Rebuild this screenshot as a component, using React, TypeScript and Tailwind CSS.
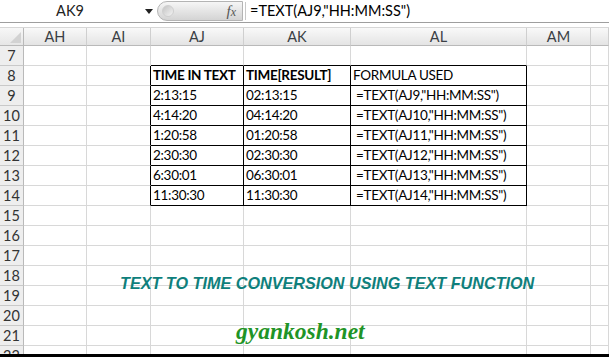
const COLS = [
  { key: "AH", w: "w-[63px]" },
  { key: "AI", w: "w-[64px]" },
  { key: "AJ", w: "w-[93px]" },
  { key: "AK", w: "w-[107px]" },
  { key: "AL", w: "w-[176px]" },
  { key: "AM", w: "w-[64px]" },
  { key: "", w: "w-[18px]" },
];

const TABLE: Record<number, string[]> = {
  8: ["TIME IN TEXT", "TIME[RESULT]", "FORMULA USED"],
  9: ["2:13:15", "02:13:15", '=TEXT(AJ9,"HH:MM:SS")'],
  10: ["4:14:20", "04:14:20", '=TEXT(AJ10,"HH:MM:SS")'],
  11: ["1:20:58", "01:20:58", '=TEXT(AJ11,"HH:MM:SS")'],
  12: ["2:30:30", "02:30:30", '=TEXT(AJ12,"HH:MM:SS")'],
  13: ["6:30:01", "06:30:01", '=TEXT(AJ13,"HH:MM:SS")'],
  14: ["11:30:30", "11:30:30", '=TEXT(AJ14,"HH:MM:SS")'],
};

function Row({ n }: { n: number }) {
  const inTable = n >= 8 && n <= 14;
  const topEdge = n >= 7 && n <= 14;
  const data = TABLE[n];
  return (
    <div className="flex h-[20px] shrink-0">
      <div className="w-[24px] shrink-0 flex items-center justify-center border-r border-b border-r-[#b9b9b9] border-b-[#c9c9c9] bg-[#eeeeee] text-[14.5px] text-[#333333]">
        {n}
      </div>
      {COLS.map((c, i) => {
        const blackRight = inTable && i >= 1 && i <= 4;
        const blackBottom = topEdge && i >= 2 && i <= 4;
        const isFormula = i === 4;
        return (
          <div
            key={c.key + i}
            className={`${c.w} shrink-0 flex items-center border-r border-b text-[13.5px] tracking-[-0.3px] text-black whitespace-nowrap overflow-hidden ${
              blackRight ? "border-r-black" : "border-r-[#d8d8d8]"
            } ${blackBottom ? "border-b-black" : "border-b-[#d8d8d8]"} ${
              isFormula ? (n === 8 ? "pl-[2px]" : "pl-[5px]") : "pl-[2px]"
            } ${n === 8 && i < 4 ? "font-bold" : ""}`}
          >
            {data && i >= 2 && i <= 4 ? data[i - 2] : null}
          </div>
        );
      })}
    </div>
  );
}

export default function App() {
  const rows = [7, 8, 9, 10, 11, 12, 13, 14, 15, 16, 17, 18, 19, 20, 21];
  return (
    <div className="relative w-[609px] h-[357px] overflow-hidden bg-white flex flex-col font-['Lato',sans-serif]">
      {/* formula bar */}
      <div className="flex h-[23px] shrink-0 border-b border-[#9e9e9e] bg-white">
        <div className="w-[140px] flex items-center justify-center text-[14.5px] text-[#222]">
          AK9
        </div>
        <div className="w-[17px] flex items-center justify-center">
          <svg width="8" height="5" viewBox="0 0 8 5">
            <path d="M0 0h8L4 5z" fill="#222" />
          </svg>
        </div>
        <div className="w-[86px] my-px flex items-center rounded-l-full border border-[#b4b4b4] bg-linear-to-b from-[#f6f6f6] to-[#d4d4d4]">
          <div className="ml-[4px] w-[12px] h-[12px] rounded-full bg-linear-to-br from-[#c4c4c4] to-[#f4f4f4] border border-[#cfcfcf]" />
          <span className="ml-auto mr-[6px] font-['Liberation_Serif',serif] italic text-[15px] text-[#555] leading-none">
            f<span className="text-[12px]">x</span>
          </span>
        </div>
        <div className="w-px my-[2px] bg-[#c8c8c8] ml-[2px]" />
        <div className="flex-1 flex items-center pl-[4px] text-[14.5px] text-black whitespace-nowrap">
          =TEXT(AJ9,"HH:MM:SS")
        </div>
      </div>
      <div className="h-[4px] shrink-0 bg-white" />
      {/* column headers */}
      <div className="flex h-[19px] shrink-0 border-t border-[#d6d6d6]">
        <div className="w-[24px] shrink-0 relative border-r border-b border-[#b9b9b9] bg-linear-to-b from-[#f7f7f7] to-[#e6e6e6]">
          <svg className="absolute right-[2px] bottom-[2px]" width="11" height="11" viewBox="0 0 11 11">
            <path d="M11 0V11H0z" fill="#d2d2d2" />
          </svg>
        </div>
        {COLS.map((c, i) => (
          <div
            key={c.key + i}
            className={`${c.w} shrink-0 flex items-center justify-center border-r border-b border-r-[#cfcfcf] border-b-[#b9b9b9] bg-linear-to-b from-[#f9f9f9] to-[#e4e4e4] text-[14.5px] text-[#3b3f45]`}
          >
            {c.key}
          </div>
        ))}
      </div>
      {rows.map((n) => (
        <Row key={n} n={n} />
      ))}
      <div className="h-[8px] shrink-0 overflow-hidden">
        <Row n={22} />
      </div>
      <div className="h-[3px] shrink-0 bg-black" />

      {/* floating text boxes */}
      <div className="absolute left-[120px] top-[275px] leading-none whitespace-nowrap font-['Liberation_Sans',sans-serif] font-bold italic text-[16.2px] text-[#0f7f7c]">
        TEXT TO TIME CONVERSION USING TEXT FUNCTION
      </div>
      <div className="absolute left-[236px] top-[320px] leading-none whitespace-nowrap font-['Liberation_Serif',serif] font-bold italic text-[23.5px] text-[#1f9427]">
        gyankosh.net
      </div>
    </div>
  );
}
